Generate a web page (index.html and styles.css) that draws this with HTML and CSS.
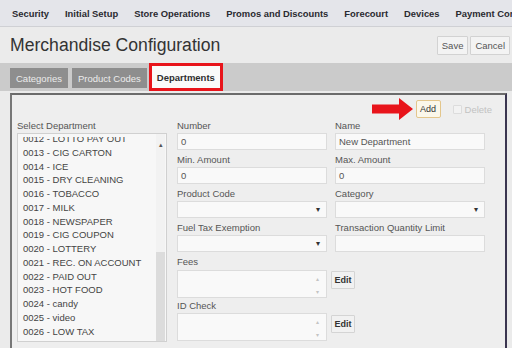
FILE: index.html
```html
<!DOCTYPE html>
<html>
<head>
<meta charset="utf-8">
<link rel="stylesheet" href="styles.css">
</head>
<body>
<nav class="topnav">
  <span>Security</span>
  <span>Initial Setup</span>
  <span>Store Operations</span>
  <span>Promos and Discounts</span>
  <span>Forecourt</span>
  <span>Devices</span>
  <span>Payment Con</span>
</nav>
<header class="titlebar">
  <h1>Merchandise Configuration</h1>
  <div class="titlebtns">
    <button class="btn">Save</button>
    <button class="btn">Cancel</button>
  </div>
</header>
<div class="tabstrip">
  <div class="tab">Categories</div>
  <div class="tab">Product Codes</div>
  <div class="tab active">Departments</div>
</div>
<section class="panel">
  <div class="actions">
    <svg class="arrow" width="42" height="22" viewBox="0 0 42 22"><path d="M0 6.5 H27 V0 L41 11 L27 22 V15.5 H0 Z" fill="#e8141b"/></svg>
    <button class="addbtn">Add</button>
    <span class="chk"></span>
    <span class="del">Delete</span>
  </div>
  <div class="body">
    <div class="listcol">
      <div class="lbl">Select Department</div>
      <div class="listbox">
        <div class="clip">
          <div class="items">
            <div class="item">0012 - LOTTO PAY OUT</div>
            <div class="item">0013 - CIG CARTON</div>
            <div class="item">0014 - ICE</div>
            <div class="item">0015 - DRY CLEANING</div>
            <div class="item">0016 - TOBACCO</div>
            <div class="item">0017 - MILK</div>
            <div class="item">0018 - NEWSPAPER</div>
            <div class="item">0019 - CIG COUPON</div>
            <div class="item">0020 - LOTTERY</div>
            <div class="item">0021 - REC. ON ACCOUNT</div>
            <div class="item">0022 - PAID OUT</div>
            <div class="item">0023 - HOT FOOD</div>
            <div class="item">0024 - candy</div>
            <div class="item">0025 - video</div>
            <div class="item">0026 - LOW TAX</div>
          </div>
        </div>
        <div class="sbar">
          <div class="sup">▴</div>
          <div class="strack"><div class="sthumb"></div></div>
        </div>
      </div>
    </div>
    <div class="form">
      <div class="field"><div class="lbl">Number</div><div class="inp">0</div></div>
      <div class="field"><div class="lbl">Name</div><div class="inp">New Department</div></div>
      <div class="field"><div class="lbl">Min. Amount</div><div class="inp">0</div></div>
      <div class="field"><div class="lbl">Max. Amount</div><div class="inp">0</div></div>
      <div class="field"><div class="lbl">Product Code</div><div class="inp sel"><span class="caret">▾</span></div></div>
      <div class="field"><div class="lbl">Category</div><div class="inp sel"><span class="caret">▾</span></div></div>
      <div class="field"><div class="lbl">Fuel Tax Exemption</div><div class="inp sel"><span class="caret">▾</span></div></div>
      <div class="field"><div class="lbl">Transaction Quantity Limit</div><div class="inp"></div></div>
      <div class="field"><div class="lbl">Fees</div><div class="ta"><span class="tarr">▴</span><span class="tarr">▾</span></div></div>
      <div class="editcell"><button class="editbtn">Edit</button></div>
      <div class="field"><div class="lbl">ID Check</div><div class="ta"><span class="tarr">▴</span><span class="tarr">▾</span></div></div>
      <div class="editcell"><button class="editbtn">Edit</button></div>
    </div>
  </div>
</section>
</body>
</html>
```
FILE: styles.css
```css
* { box-sizing: border-box; }
html, body { margin: 0; padding: 0; }
body {
  width: 512px;
  height: 348px;
  overflow: hidden;
  background: #ebebeb;
  font-family: "Liberation Sans", Arial, sans-serif;
  color: #444;
}
.topnav {
  height: 27px;
  background: #e4e5ea;
  border-bottom: 1px solid #cfd0d4;
  display: flex;
  align-items: center;
  gap: 16px;
  padding-left: 12px;
  white-space: nowrap;
  overflow: hidden;
  font-weight: bold;
  font-size: 9.4px;
  color: #2a2a30;
}
.titlebar {
  height: 36px;
  display: flex;
  align-items: center;
  justify-content: space-between;
  padding: 1px 2px 0 10px;
}
.titlebar h1 {
  margin: 0;
  font-weight: normal;
  font-size: 17.6px;
  color: #333;
}
.titlebtns { display: flex; gap: 2px; }
.btn {
  height: 19px;
  padding: 0 4px;
  background: #f3f3f3;
  border: 1px solid #d2d2d2;
  border-radius: 1px;
  font-family: inherit;
  font-size: 9.5px;
  color: #555;
}
.tabstrip {
  height: 28px;
  background: #cbcbcb;
  display: flex;
  align-items: flex-end;
  gap: 4px;
  padding: 0 0 3px 10px;
}
.tab {
  height: 20px;
  padding: 0 6px;
  background: #8e8e8e;
  color: #ececec;
  font-size: 9.5px;
  display: flex;
  align-items: center;
}
.tab.active {
  margin-left: 1px;
  height: 22px;
  background: #fafafa;
  color: #2e2e2e;
  font-weight: bold;
  outline: 3px solid #e8141b;
  padding: 0 5px;
}
.panel {
  margin: 2px 5px 0 10px;
  height: 260px;
  background: #eeeeee;
  border-top: 2px solid #6b6b6b;
  border-left: 2px solid #777;
  border-right: 2px solid #3a3550;
  padding: 4px 0 0 5px;
  overflow: hidden;
}
.actions {
  height: 20px;
  display: flex;
  align-items: center;
  justify-content: flex-end;
  padding-right: 13px;
}
.arrow { margin-right: 2px; }
.addbtn {
  height: 18px;
  width: 25px;
  padding: 0;
  background: #fbf7ea;
  border: 1px solid #e3c68c;
  border-radius: 2px;
  font-family: inherit;
  font-size: 9px;
  color: #333;
}
.chk {
  width: 9px;
  height: 9px;
  margin-left: 12px;
  border: 1px solid #dcdcdc;
  border-radius: 1px;
  background: #f2f2f2;
}
.del { margin-left: 3px; font-size: 9.5px; color: #c2c2c2; }
.body {
  display: flex;
  gap: 10px;
  margin-top: 1px;
}
.lbl {
  font-size: 9.5px;
  line-height: 12px;
  height: 12px;
  color: #555;
  white-space: nowrap;
}
.listcol { width: 150px; }
.listbox {
  margin-top: 1px;
  height: 209px;
  background: #f7f7f7;
  border: 1px solid #d0d0d0;
  display: flex;
  overflow: hidden;
}
.clip { flex: 1; margin-top: 3px; overflow: hidden; }
.items { margin-top: -5px; padding-left: 5px; }
.item {
  height: 13.77px;
  line-height: 13.77px;
  font-size: 9.5px;
  color: #444;
  white-space: nowrap;
}
.sbar {
  width: 9px;
  margin-right: 1px;
  display: flex;
  flex-direction: column;
  background: #f2f2f2;
}
.sup {
  height: 18px;
  font-size: 7px;
  color: #555;
  text-align: center;
  line-height: 22px;
}
.strack { flex: 1; padding-top: 100px; }
.sthumb { height: 200px; background: #dcdcdc; }
.form {
  display: grid;
  grid-template-columns: 150px 150px;
  column-gap: 8px;
  row-gap: 4px;
  align-content: start;
}
.inp {
  margin-top: 1px;
  height: 17px;
  background: #f9f9f9;
  border: 1px solid #dcdcdc;
  font-size: 9.5px;
  line-height: 15px;
  padding-left: 3px;
  color: #555;
}
.sel { display: flex; justify-content: flex-end; padding-right: 6px; }
.caret { font-size: 8px; color: #333; }
.ta {
  margin-top: 2px;
  height: 28px;
  background: #f9f9f9;
  border: 1px solid #dcdcdc;
  display: flex;
  flex-direction: column;
  align-items: flex-end;
  justify-content: space-between;
  padding: 4px 7px 1px 0;
}
.tarr { font-size: 6px; color: #c4c4c4; line-height: 8px; }
.field:nth-last-child(2) .ta { margin-top: 1px; }
.field:nth-last-child(2) { margin-top: -2px; }
.editcell { padding-top: 13px; margin-left: -4px; }
.editcell:last-child { padding-top: 11px; }
.editbtn {
  height: 18px;
  width: 24px;
  padding: 0;
  background: #f1f1f1;
  border: 1px solid #d4d4d4;
  border-radius: 1px;
  font-family: inherit;
  font-weight: bold;
  font-size: 9px;
  color: #333;
}
```
